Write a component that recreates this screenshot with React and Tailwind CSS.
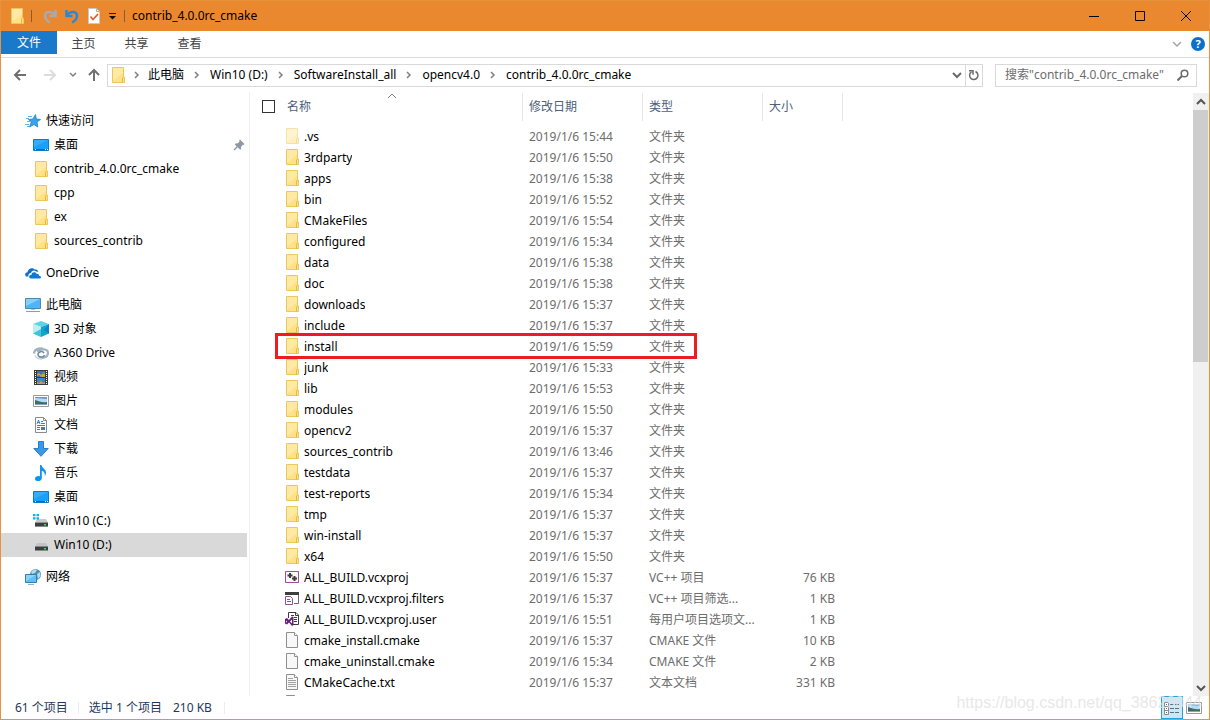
import React from 'react';

const TOTAL_ITEMS = 61;
const VISIBLE_ITEMS = 27;

const Svg = ({ children, size = 'size-4', box = '0 0 16 16' }) => (
    <svg className={`${size} shrink-0`} viewBox={box} fill="none" aria-hidden="true">{children}</svg>
);

const FolderIcon = ({ faded }) => (
    <Svg>
        <g opacity={faded ? 0.5 : 1}>
            <path d="M2.5.5h11v9.500h1v5.500h-12z" fill="#ffe188" stroke="#ecc75a" />
            <path d="M3 1h10v5L3 14z" fill="#ffe9a4" />
            <path d="M12.5 15.5v-4.500l1-1" stroke="#e5ba3c" />
        </g>
    </Svg>
);

const DesktopIcon = () => (
    <Svg>
        <path d="M.5 2.500h15v11H.5z" fill="#1aa0fb" stroke="#0e7ac4" />
        <path d="M1 3h14L1 10z" fill="#35adfc" />
        <path d="M1 12.500h14" stroke="#0c62a8" />
        <path d="M2 12.500h1M12 12.500h1M14 12.500h1" stroke="#fff" />
    </Svg>
);

const QuickIcon = () => (
    <Svg>
        <path d="M10.500 1.500l.8 4.500 4.200.5-3.500 2.500.8 5-3.800-2.500-4.500 2.500 1.800-5L3.500 6.500l4.300-.5z" fill="#35a4ee" stroke="#1b82ca" strokeWidth=".8" />
        <path d="M3 3.500h4M1 5.500h3M2 8.500h3M0 11.500h4M2 13.500h2" stroke="#5fb5ec" />
    </Svg>
);

const OneDriveIcon = () => (
    <Svg>
        <path d="M1 11.500C-.5 10 0 7.500 2.500 7.300 2.700 4 7 1.800 9.800 4.600c1.800-.5 3.400.6 3.600 2.200L11 6.500C9 4.800 6.500 5.700 6 8c-2 0-3 1.500-2.500 3.500z" fill="#0f6fc9" />
        <path d="M6 13.500c-2.500 0-2.600-3.700.5-3.800.3-2.700 3.700-3.200 5-1 1.700-.3 2.600.8 2.500 2 2.600.2 2.500 2.800.3 2.800z" fill="#0f78d4" />
    </Svg>
);

const ComputerIcon = () => (
    <Svg>
        <path d="M.5 1.500h15v10H.5z" fill="#4fb6f5" stroke="#4d89ad" />
        <path d="M1 2h14L1 9z" fill="#86d0fa" />
        <path d="M6 12h4v1H6z" fill="#b4c2cc" />
        <path d="M1 14.500h14" stroke="#8d9cae" />
    </Svg>
);

const CubeIcon = () => (
    <Svg>
        <path d="M0 3l8-3 8 3-8 3z" fill="#5fd3e6" />
        <path d="M0 3l8 3v10l-8-3.500z" fill="#bdeef2" />
        <path d="M16 3L8 6v10l8-3.500z" fill="#14a3c9" />
        <path d="M0 12.500L8 8v8z" fill="#3ec3d8" />
        <path d="M16 3v9.500L11 9z" fill="#0c86c4" />
    </Svg>
);

const SwirlIcon = () => (
    <Svg>
        <path d="M1 8.500C1 5 5 2.500 10 3.500M4 6.500C8 3 15 4 15 8s-5 6-9 4.500" stroke="#9fb4c0" strokeWidth="2.200" />
        <path d="M11 8C9.500 5.500 5 6.500 5 9.500s5.500 3.500 6.500.5" stroke="#738c9b" strokeWidth="1.500" />
        <path d="M2 10.500c1 2.500 4 3.500 7 3.500" stroke="#cbd9e1" strokeWidth="1.500" />
    </Svg>
);

const VideoIcon = () => (
    <Svg>
        <path d="M1 1h14v15H1z" fill="#3a3a3a" />
        <path d="M4 2h8v6H4z" fill="#3972c5" />
        <path d="M4 9h8v6H4z" fill="#3b82d8" />
        <path d="M4 5l2-1 2 2 3-3 1 1v4H8L7 7H4zM4 13l2 1 2-2 2 2 2-1v2H4z" fill="#c9a33a" />
        <path d="M9 4h3v1H9zM5 6h2v1H5zM6 11h3v1H6z" fill="#4aa05d" />
        <path d="M2.500 2v14M13.500 2v14" stroke="#fff" strokeDasharray="1 1" />
    </Svg>
);

const PictureIcon = () => (
    <Svg>
        <path d="M.5 2.500h15v11H.5z" fill="#fff" stroke="#9a9a9a" />
        <path d="M2 4h12v8H2z" fill="#b5daf8" />
        <path d="M2 4h12v2L2 5z" fill="#5b9be0" />
        <path d="M2 7c4 1 7 3 12 2v2H2z" fill="#3f6f5c" />
        <path d="M2 11h12v1H2z" fill="#7ba6c4" />
    </Svg>
);

const DocumentIcon = () => (
    <Svg>
        <path d="M2.500.5h8l3 3v12h-11z" fill="#fff" stroke="#8b8b8b" />
        <path d="M10.500.5v3h3" stroke="#8b8b8b" />
        <path d="M4 7l1.500-4L7 7M4.500 5.500h2M8 4.500h2M8 6.500h4M4 8.500h8M4 10.500h3M4 12.500h3" stroke="#2f87d3" />
        <path d="M8 10h4v3H8z" fill="#3b7ec0" />
    </Svg>
);

const DownloadIcon = () => (
    <Svg>
        <path d="M5.500.5h5v7h4.700L8 15.300.8 7.500h4.700z" fill="#3b97e8" stroke="#2a7dc9" />
    </Svg>
);

const MusicIcon = () => (
    <Svg>
        <path d="M7 0h1.500c.3 3 4.500 4 4.500 7.500 0 1.500-.6 2.500-1.200 3.500.2-3-1-4.500-3-5.200V13c0 4-6.800 4-6.800.8 0-2.300 3-3.300 5-2.300z" fill="#0b95ef" />
    </Svg>
);

const DriveIcon = ({ system }) => (
    <Svg>
        <path d="M4 6h9l2 3.500H2z" fill={system ? '#c9c9c9' : '#c4c4c4'} />
        <path d="M2 9.500h13v4H2z" fill="#3c3f40" />
        <path d="M2 13.500h13" stroke="#8b8b8b" />
        <path d="M11 11h2v1.500h-2z" fill="#35e04a" />
        {system && <path d="M0 1h2.500v2.200H0zM3.500 1H6v2.200H3.500zM0 4.200h2.500v2.200H0zM3.500 4.200H6v2.200H3.500z" fill="#12b1ee" />}
    </Svg>
);

const NetworkIcon = () => (
    <Svg>
        <circle cx="10.500" cy="5.500" r="5.500" fill="#4e8fb5" />
        <path d="M6 3c2-3 5-3 6-2l-2 3-3 1zM12 5l3-2 .5 4-2.500 3z" fill="#b9dbe8" />
        <path d="M.5 5.500h11v8H.5z" fill="#5cc0fa" stroke="#2f7fb5" />
        <path d="M1 6h10L1 12z" fill="#8ad4fc" />
        <path d="M3 15.500h6" stroke="#9fb0bd" />
    </Svg>
);

const VcxprojIcon = () => (
    <Svg>
        <path d="M1.500 2.500h13v11h-13z" fill="#fbf6fc" stroke="#9b4f96" />
        <path d="M6 4v5M3.500 6.500h5M10.500 7v5M8 9.500h5" stroke="#3d3d3d" strokeWidth="2" />
    </Svg>
);

const FiltersIcon = () => (
    <Svg>
        <path d="M1 2h14v3H1z" fill="#3d3d3d" />
        <path d="M14.500 5v8.500H10" stroke="#6a6a6a" />
        <path d="M1.500 6.500h5l2 2v6h-7z" fill="#fff" stroke="#9b4f96" />
        <path d="M3 9.500h3M3 11.500h4" stroke="#9b4f96" />
    </Svg>
);

const UserFileIcon = () => (
    <Svg>
        <path d="M4.500 7V1.500h7.500l2.500 2.500v9.500H9" fill="#fff" stroke="#3d3d3d" />
        <path d="M11.500 1.500v3h3M7 4.500h3M10 6.500h3M10 8.500h3M10 10.500h3" stroke="#3d3d3d" />
        <path d="M1 8l2-1 2 2 3-3.500 1.500.5v8L8 15l-3-3.500L3 13.500l-2-1zm1 1.500v2.200l1-1.100zM8 8.500l-2 2 2 2z" fill="#68217a" fillRule="evenodd" />
    </Svg>
);

const BlankFileIcon = ({ lines }) => (
    <Svg>
        <path d="M2.500.5h8l3 3v12h-11z" fill="#f8f8f8" stroke="#8f8f8f" />
        <path d="M10.500.5v3h3" fill="#fff" stroke="#8f8f8f" />
        {lines && <path d="M4 4.500h5M4 6.500h8M4 8.500h8M4 10.500h8M4 12.500h8" stroke="#a0a0a0" />}
    </Svg>
);

const Chevron = ({ d, color = '#808080', width = 1.5 }) => (
    <Svg size="size-3" box="0 0 12 12"><path d={d} stroke={color} strokeWidth={width} /></Svg>
);

const RIGHT = 'M4 3l3 3-3 3';
const DOWN = 'M2 4l4 4 4-4';
const UP = 'M2 8l4-4 4 4';

const sidebarGroups = [
    {
        name: '快速访问', icon: <QuickIcon />,
        children: [
            { name: '桌面', icon: <DesktopIcon />, pinned: true },
            { name: 'contrib_4.0.0rc_cmake', icon: <FolderIcon /> },
            { name: 'cpp', icon: <FolderIcon /> },
            { name: 'ex', icon: <FolderIcon /> },
            { name: 'sources_contrib', icon: <FolderIcon /> },
        ],
    },
    { name: 'OneDrive', icon: <OneDriveIcon />, children: [] },
    {
        name: '此电脑', icon: <ComputerIcon />,
        children: [
            { name: '3D 对象', icon: <CubeIcon /> },
            { name: 'A360 Drive', icon: <SwirlIcon /> },
            { name: '视频', icon: <VideoIcon /> },
            { name: '图片', icon: <PictureIcon /> },
            { name: '文档', icon: <DocumentIcon /> },
            { name: '下载', icon: <DownloadIcon /> },
            { name: '音乐', icon: <MusicIcon /> },
            { name: '桌面', icon: <DesktopIcon /> },
            { name: 'Win10 (C:)', icon: <DriveIcon system /> },
            { name: 'Win10 (D:)', icon: <DriveIcon />, selected: true },
        ],
    },
    { name: '网络', icon: <NetworkIcon />, children: [] },
];

const folders = [
    ['.vs', '15:44'], ['3rdparty', '15:50'], ['apps', '15:38'], ['bin', '15:52'], ['CMakeFiles', '15:54'],
    ['configured', '15:34'], ['data', '15:38'], ['doc', '15:38'], ['downloads', '15:37'], ['include', '15:37'],
    ['install', '15:59'], ['junk', '15:33'], ['lib', '15:53'], ['modules', '15:50'], ['opencv2', '15:37'],
    ['sources_contrib', '13:46'], ['testdata', '15:37'], ['test-reports', '15:34'], ['tmp', '15:37'],
    ['win-install', '15:37'], ['x64', '15:50'],
].map(([name, time]) => ({ name, time, type: '文件夹', size: '', icon: <FolderIcon faded={name === '.vs'} /> }));

const files = [
    { name: 'ALL_BUILD.vcxproj', time: '15:37', type: 'VC++ 项目', size: '76 KB', icon: <VcxprojIcon /> },
    { name: 'ALL_BUILD.vcxproj.filters', time: '15:37', type: 'VC++ 项目筛选...', size: '1 KB', icon: <FiltersIcon /> },
    { name: 'ALL_BUILD.vcxproj.user', time: '15:51', type: '每用户项目选项文...', size: '1 KB', icon: <UserFileIcon /> },
    { name: 'cmake_install.cmake', time: '15:37', type: 'CMAKE 文件', size: '10 KB', icon: <BlankFileIcon /> },
    { name: 'cmake_uninstall.cmake', time: '15:34', type: 'CMAKE 文件', size: '2 KB', icon: <BlankFileIcon /> },
    { name: 'CMakeCache.txt', time: '15:37', type: '文本文档', size: '331 KB', icon: <BlankFileIcon lines /> },
];

const TitleBar = () => (
    <header className="flex h-[30px] shrink-0 items-center bg-[#ea8830] pl-2">
        <FolderIcon />
        <span className="ml-[6px] h-3 w-px bg-[#8a5a34]" />
        <button aria-label="恢复" className="ml-[10px]">
            <Svg>
                <path d="M13.500 2v6h-6" stroke="#a9a9b2" strokeWidth="2.500" />
                <path d="M12.500 7C10 2.500 3 3 3 8c0 3 2 5 5 6.500" stroke="#a9a9b2" strokeWidth="2.500" />
            </Svg>
        </button>
        <button aria-label="撤消" className="ml-[6px]">
            <Svg>
                <path d="M2.500 2v6h6" stroke="#2f86d2" strokeWidth="2.500" />
                <path d="M3.500 7C6 2.500 13 3 13 8c0 3-2 5-5 6.500" stroke="#2f86d2" strokeWidth="2.500" />
            </Svg>
        </button>
        <button aria-label="属性" className="ml-[6px]">
            <Svg>
                <path d="M2.500.5h8l3 3v12h-11z" fill="#fff" stroke="#c9c9c9" />
                <path d="M10.500.5v3h3" stroke="#b0b0b0" />
                <path d="M4.500 8.500l2.500 3 5-5.500" stroke="#e0602a" strokeWidth="1.800" />
            </Svg>
        </button>
        <button aria-label="自定义快速访问工具栏" className="ml-[5px]">
            <Svg size="size-3" box="0 0 12 12">
                <path d="M2 3.500h7" stroke="#222" />
                <path d="M2 6h7L5.500 9.500z" fill="#111" />
            </Svg>
        </button>
        <span className="ml-[5px] h-3 w-px bg-[#8a5a34]" />
        <h1 className="ml-[7px] flex-1 truncate">contrib_4.0.0rc_cmake</h1>
        <button aria-label="最小化" className="flex h-full w-[46px] items-center justify-center">
            <Svg size="size-3" box="0 0 12 12"><path d="M1 6.500h10" stroke="#000" /></Svg>
        </button>
        <button aria-label="最大化" className="flex h-full w-[46px] items-center justify-center">
            <Svg size="size-3" box="0 0 12 12"><path d="M1.500 1.500h9v9h-9z" stroke="#000" /></Svg>
        </button>
        <button aria-label="关闭" className="flex h-full w-[46px] items-center justify-center">
            <Svg size="size-3" box="0 0 12 12"><path d="M1 1l10 10M11 1L1 11" stroke="#000" /></Svg>
        </button>
    </header>
);

const Ribbon = () => (
    <div className="flex h-[27px] shrink-0 items-start border-b border-[#dadbdc] text-[#444]">
        <button className="h-[23px] w-14 bg-[#1979ca] text-white">文件</button>
        {['主页', '共享', '查看'].map((tab) => (
            <button key={tab} className="h-[25px] w-[53px]">{tab}</button>
        ))}
        <div className="ml-auto flex h-[26px] items-center gap-2 pr-1">
            <button aria-label="展开功能区"><Chevron d={DOWN} color="#a6a6a6" /></button>
            <button aria-label="帮助" className="flex size-[14px] items-center justify-center rounded-full bg-[#0a70cc] text-[11px] font-bold text-white">?</button>
        </div>
    </div>
);

const AddressBar = () => (
    <div className="flex h-[34px] shrink-0 items-center pr-3 pl-[11px]">
        <button aria-label="返回"><Svg><path d="M14 8H3M8 3L3 8l5 5" stroke="#707070" strokeWidth="2" /></Svg></button>
        <button aria-label="前进" className="ml-[14px]"><Svg><path d="M2 8h11M8 3l5 5-5 5" stroke="#dcdcdc" strokeWidth="2" /></Svg></button>
        <button aria-label="最近浏览的位置" className="ml-[9px]"><Chevron d="M3 4l3 3 3-3" /></button>
        <button aria-label="上移" className="ml-[7px]"><Svg><path d="M8 14V3M3 8l5-5 5 5" stroke="#707070" strokeWidth="2" /></Svg></button>
        <nav aria-label="地址" className="ml-[5px] flex h-[23px] flex-1 items-center border border-[#d9d9d9] pl-[2px]">
            <FolderIcon />
            <span className="flex w-[22px] justify-center"><Chevron d={RIGHT} /></span>
            {['此电脑', 'Win10 (D:)', 'SoftwareInstall_all', 'opencv4.0', 'contrib_4.0.0rc_cmake'].map((part, i) => (
                <React.Fragment key={part}>
                    {i > 0 && <span className="flex w-[26px] justify-center"><Chevron d={RIGHT} /></span>}
                    <a href="#" className="whitespace-nowrap">{part}</a>
                </React.Fragment>
            ))}
            <button aria-label="上一个位置" className="ml-auto px-[2px]"><Chevron d={DOWN} color="#6b6b6b" width={2} /></button>
            <button aria-label="刷新" className="flex h-full w-[17px] items-center justify-center border-l border-[#d9d9d9]">
                <Svg size="size-3" box="0 0 12 12">
                    <path d="M7.500 2.500a4.200 4.200 0 1 1-4 .3" stroke="#6b6b6b" strokeWidth="1.500" />
                    <path d="M1 1.800h4v4" stroke="#6b6b6b" strokeWidth="1.500" />
                </Svg>
            </button>
        </nav>
        <label className="ml-3 flex h-[23px] w-[202px] items-center border border-[#d9d9d9] pr-[7px] pl-[9px]">
            <input
                type="text"
                aria-label="搜索"
                placeholder={'搜索"contrib_4.0.0rc_cmake"'}
                className="min-w-0 flex-1 outline-none placeholder:text-[#6d6d6d]"
            />
            <Svg size="size-3" box="0 0 12 12">
                <circle cx="7.500" cy="4.500" r="3.300" stroke="#6b6b6b" strokeWidth="1.500" />
                <path d="M5 7l-4.500 4.500" stroke="#6b6b6b" strokeWidth="2" />
            </Svg>
        </label>
    </div>
);

const SidebarLink = ({ item, nested }) => (
    <a href="#" className={`mr-[2px] flex h-6 items-center gap-[5px] ${nested ? 'pl-8' : 'pl-6'} ${item.selected ? 'bg-[#d9d9d9]' : ''}`}>
        {item.icon}
        <span className="flex-1">{item.name}</span>
        {item.pinned && (
            <span className="mr-[2px]">
                <Svg size="size-3" box="0 0 12 12">
                    <path d="M7 .5L11.500 5l-1 1-.7-.2L8 8l.2 2-1 .8L1.800 5.400l.8-1L5 4.300 6.500 2.500l-.3-1z" fill="#8c99a5" />
                    <path d="M4.500 7.500L1 11" stroke="#8c99a5" strokeWidth="1.500" />
                </Svg>
            </span>
        )}
    </a>
);

const Sidebar = () => (
    <aside className="flex w-[249px] shrink-0 flex-col gap-2 overflow-hidden border-r border-[#f0f0f0] pt-[17px]">
        {sidebarGroups.map((group) => (
            <div key={group.name}>
                <SidebarLink item={group} />
                {group.children.map((item) => <SidebarLink key={item.name} item={item} nested />)}
            </div>
        ))}
    </aside>
);

const HeaderCell = ({ children }) => (
    <th className="p-0 align-top font-normal">
        <div className="mt-px flex h-7 items-center border-r border-[#e5e5e5] pl-[6px]">{children}</div>
    </th>
);

const FileTable = () => (
    <table className="w-[593px] table-fixed text-left">
        <colgroup>
            <col className="w-[273px]" />
            <col className="w-[120px]" />
            <col className="w-[120px]" />
            <col className="w-20" />
        </colgroup>
        <thead className="text-[#4c607a]">
            <tr className="h-[34px]">
                <th className="relative p-0 align-top font-normal">
                    <div className="mt-px flex h-7 items-center gap-3 border-r border-[#e5e5e5] pl-3">
                        <input type="checkbox" aria-label="全选" className="mb-px size-[13px] appearance-none border border-[#333] bg-white" />
                        名称
                    </div>
                    <span className="absolute top-0 left-[136px]"><Chevron d="M2 6l4-4 4 4" width={1} /></span>
                </th>
                <HeaderCell>修改日期</HeaderCell>
                <HeaderCell>类型</HeaderCell>
                <HeaderCell>大小</HeaderCell>
            </tr>
        </thead>
        <tbody className="text-[#6d6d6d]">
            {[...folders, ...files].map((file) => (
                <tr key={file.name} className="h-[21px]">
                    <td className="relative p-0">
                        <div className="flex h-[21px] items-center gap-1 pl-[34px] text-black">
                            <span className="mb-px">{file.icon}</span>
                            <span className="truncate">{file.name}</span>
                        </div>
                        {file.name === 'install' && (
                            <span className="absolute -top-[3px] left-[25px] h-[26px] w-[422px] border-[3px] border-[#ed1c24]" />
                        )}
                    </td>
                    <td className="p-0 pl-[6px]">{`2019/1/6 ${file.time}`}</td>
                    <td className="p-0 pl-[6px] whitespace-nowrap">{file.type}</td>
                    <td className="p-0 pr-2 text-right">{file.size}</td>
                </tr>
            ))}
            <tr className="h-[21px]">
                <td className="p-0">
                    <div className="flex h-[21px] items-center pl-[34px]">
                        <span className="mb-px"><BlankFileIcon lines /></span>
                    </div>
                </td>
                <td colSpan={3} />
            </tr>
        </tbody>
    </table>
);

const ScrollBar = () => (
    <div className="mt-px flex w-4 shrink-0 flex-col bg-[#f0f0f0]">
        <button aria-label="向上滚动" className="flex h-[17px] items-center justify-center"><Chevron d={UP} color="#555" width={2} /></button>
        <div className="flex-1">
            <div className="mr-px bg-[#cdcdcd]" style={{ height: `${(VISIBLE_ITEMS / TOTAL_ITEMS) * 100}%` }} />
        </div>
        <button aria-label="向下滚动" className="flex h-[17px] items-center justify-center"><Chevron d={DOWN} color="#555" width={2} /></button>
    </div>
);

const StatusBar = () => (
    <footer className="relative flex h-[23px] shrink-0 items-center pl-[14px] text-[#1e395b]">
        <span>{TOTAL_ITEMS} 个项目</span>
        <span className="mx-[10px] h-3 w-px bg-[#ececec]" />
        <span>选中 1 个项目</span>
        <span className="ml-[11px]">210 KB</span>
        <span className="ml-3 h-3 w-px bg-[#ececec]" />
        <button aria-label="详细信息" className="ml-auto flex h-full w-[22px] items-center justify-center border border-[#26a0da] bg-[#cce8f6]">
            <Svg>
                <path d="M.5 2.500h4v4h-4zM.5 6.500h4v4h-4zM.5 10.500h4v4h-4z" fill="#fff" stroke="#8a8a8a" />
                <path d="M2 4.500h1M2 8.500h1M2 12.500h1M6 4.500h4M11 4.500h4M6 8.500h4M11 8.500h4M6 12.500h4M11 12.500h4" stroke="#5b6f80" />
            </Svg>
        </button>
        <button aria-label="大缩略图" className="mr-[7px] ml-[3px]"><PictureIcon /></button>
        <span className="pointer-events-none absolute right-[7px] bottom-1 font-['Liberation_Sans'] text-[16px] leading-6 text-[#e2e2e2]/80">
            https://blog.csdn.net/qq_38629044
        </span>
    </footer>
);

const App = () => {
    return (
        <div className="flex h-screen flex-col overflow-hidden border border-[#e8913f] bg-white font-['Noto_Sans','Noto_Sans_CJK_SC',sans-serif] text-[12px] leading-4 text-black">
            <TitleBar />
            <Ribbon />
            <AddressBar />
            <div className="flex min-h-0 flex-1">
                <Sidebar />
                <main className="min-w-0 flex-1 overflow-hidden">
                    <FileTable />
                </main>
                <ScrollBar />
            </div>
            <StatusBar />
        </div>
    );
};

export default App;
